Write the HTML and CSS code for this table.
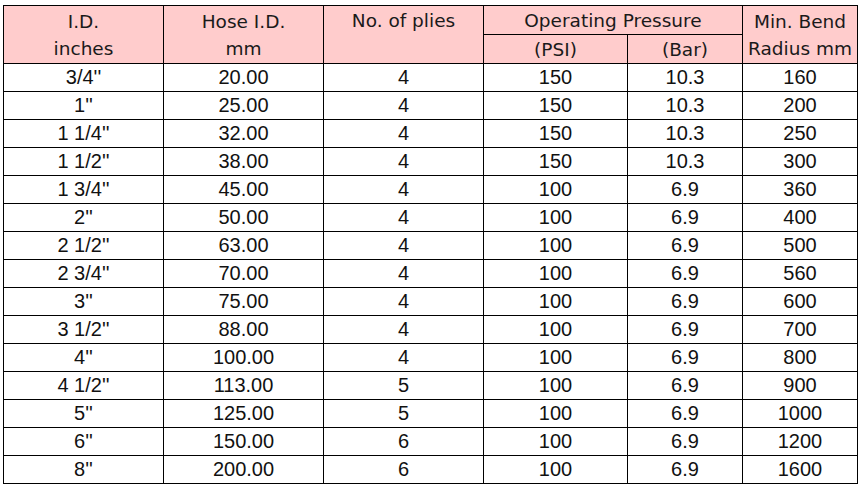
FILE: index.html
```html
<!DOCTYPE html>
<html>
<head>
<meta charset="utf-8">
<link rel="stylesheet" href="styles.css">
</head>
<body>
<table class="spec">
  <colgroup>
    <col class="w160"><col class="w160"><col class="w160"><col class="w144"><col class="w115"><col class="w115">
  </colgroup>
  <thead>
    <tr>
      <th rowspan="2">I.D.<br>inches</th>
      <th rowspan="2">Hose I.D.<br>mm</th>
      <th rowspan="2" class="top">No. of plies</th>
      <th colspan="2">Operating Pressure</th>
      <th rowspan="2">Min. Bend<br>Radius mm</th>
    </tr>
    <tr>
      <th>(PSI)</th>
      <th>(Bar)</th>
    </tr>
  </thead>
  <tbody>
    <tr><td>3/4''</td><td>20.00</td><td>4</td><td>150</td><td>10.3</td><td>160</td></tr>
    <tr><td>1''</td><td>25.00</td><td>4</td><td>150</td><td>10.3</td><td>200</td></tr>
    <tr><td>1 1/4''</td><td>32.00</td><td>4</td><td>150</td><td>10.3</td><td>250</td></tr>
    <tr><td>1 1/2''</td><td>38.00</td><td>4</td><td>150</td><td>10.3</td><td>300</td></tr>
    <tr><td>1 3/4''</td><td>45.00</td><td>4</td><td>100</td><td>6.9</td><td>360</td></tr>
    <tr><td>2''</td><td>50.00</td><td>4</td><td>100</td><td>6.9</td><td>400</td></tr>
    <tr><td>2 1/2''</td><td>63.00</td><td>4</td><td>100</td><td>6.9</td><td>500</td></tr>
    <tr><td>2 3/4''</td><td>70.00</td><td>4</td><td>100</td><td>6.9</td><td>560</td></tr>
    <tr><td>3''</td><td>75.00</td><td>4</td><td>100</td><td>6.9</td><td>600</td></tr>
    <tr><td>3 1/2''</td><td>88.00</td><td>4</td><td>100</td><td>6.9</td><td>700</td></tr>
    <tr><td>4''</td><td>100.00</td><td>4</td><td>100</td><td>6.9</td><td>800</td></tr>
    <tr><td>4 1/2''</td><td>113.00</td><td>5</td><td>100</td><td>6.9</td><td>900</td></tr>
    <tr><td>5''</td><td>125.00</td><td>5</td><td>100</td><td>6.9</td><td>1000</td></tr>
    <tr><td>6''</td><td>150.00</td><td>6</td><td>100</td><td>6.9</td><td>1200</td></tr>
    <tr><td>8''</td><td>200.00</td><td>6</td><td>100</td><td>6.9</td><td>1600</td></tr>
  </tbody>
</table>
</body>
</html>
```
FILE: styles.css
```css
html, body {
  margin: 0;
  padding: 0;
  background: #ffffff;
}
body {
  padding: 5px 0 0 3px;
}
.spec {
  border-collapse: collapse;
  table-layout: fixed;
  width: 855px;
  color: #111;
}
.w160 { width: 160px; }
.w144 { width: 144px; }
.w115 { width: 115px; }
.spec th,
.spec td {
  border: 1px solid #000;
  padding: 0;
  text-align: center;
  white-space: nowrap;
  overflow: hidden;
}
.spec th {
  background: #ffcccc;
  font-family: "DejaVu Sans", "Noto Sans", sans-serif;
  font-weight: 400;
  font-size: 18.5px;
  padding-top: 1px;
  line-height: 27px;
  height: 26px;
  vertical-align: middle;
  color: #1a1a1a;
}
.spec th.top {
  vertical-align: top;
}
.spec td {
  font-family: "Liberation Sans", Arial, sans-serif;
  font-size: 20px;
  line-height: 27px;
  height: 27px;
}
```
